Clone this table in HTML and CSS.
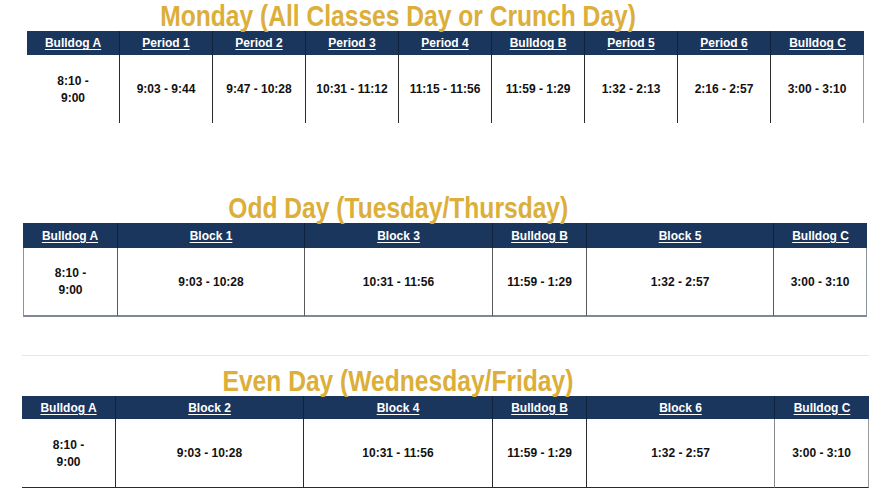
FILE: index.html
```html
<!DOCTYPE html>
<html>
<head>
<meta charset="utf-8">
<link rel="stylesheet" href="styles.css">
</head>
<body>
<main class="page">
  <section class="day mon">
    <h2 class="title"><span class="title-text">Monday (All Classes Day or Crunch Day)</span></h2>
    <div class="hd first"><u>Bulldog A</u></div>
    <div class="hd"><u>Period 1</u></div>
    <div class="hd"><u>Period 2</u></div>
    <div class="hd"><u>Period 3</u></div>
    <div class="hd"><u>Period 4</u></div>
    <div class="hd"><u>Bulldog B</u></div>
    <div class="hd"><u>Period 5</u></div>
    <div class="hd"><u>Period 6</u></div>
    <div class="hd"><u>Bulldog C</u></div>
    <div class="cell first">8:10 -<br>9:00</div>
    <div class="cell">9:03 - 9:44</div>
    <div class="cell">9:47 - 10:28</div>
    <div class="cell">10:31 - 11:12</div>
    <div class="cell">11:15 - 11:56</div>
    <div class="cell">11:59 - 1:29</div>
    <div class="cell">1:32 - 2:13</div>
    <div class="cell">2:16 - 2:57</div>
    <div class="cell last">3:00 - 3:10</div>
  </section>

  <section class="day odd">
    <h2 class="title"><span class="title-text">Odd Day (Tuesday/Thursday)</span></h2>
    <div class="hd first"><u>Bulldog A</u></div>
    <div class="hd"><u>Block 1</u></div>
    <div class="hd"><u>Block 3</u></div>
    <div class="hd"><u>Bulldog B</u></div>
    <div class="hd"><u>Block 5</u></div>
    <div class="hd"><u>Bulldog C</u></div>
    <div class="cell first">8:10 -<br>9:00</div>
    <div class="cell">9:03 - 10:28</div>
    <div class="cell">10:31 - 11:56</div>
    <div class="cell">11:59 - 1:29</div>
    <div class="cell">1:32 - 2:57</div>
    <div class="cell last">3:00 - 3:10</div>
  </section>

  <div class="gridline"></div>

  <section class="day even">
    <h2 class="title"><span class="title-text">Even Day (Wednesday/Friday)</span></h2>
    <div class="hd first"><u>Bulldog A</u></div>
    <div class="hd"><u>Block 2</u></div>
    <div class="hd"><u>Block 4</u></div>
    <div class="hd"><u>Bulldog B</u></div>
    <div class="hd"><u>Block 6</u></div>
    <div class="hd"><u>Bulldog C</u></div>
    <div class="cell first">8:10 -<br>9:00</div>
    <div class="cell">9:03 - 10:28</div>
    <div class="cell">10:31 - 11:56</div>
    <div class="cell">11:59 - 1:29</div>
    <div class="cell">1:32 - 2:57</div>
    <div class="cell last">3:00 - 3:10</div>
  </section>
</main>
</body>
</html>
```

FILE: styles.css
```css
html, body {
  margin: 0;
  padding: 0;
  background: #ffffff;
}

.page {
  width: 880px;
  height: 504px;
  overflow: hidden;
  font-family: "Liberation Sans", Arial, sans-serif;
  color: #111;
}

.day {
  display: grid;
}

.title {
  grid-row: 1;
  grid-column: 1 / -2;
  margin: 0;
  height: 31px;
  line-height: 31px;
  text-align: center;
  font-family: "Liberation Sans", Arial, sans-serif;
  font-weight: 700;
  font-size: 30px;
  color: #dcae3a;
  white-space: nowrap;
}

.title-text {
  display: inline-block;
  transform: scaleX(0.82);
  transform-origin: center;
}

.hd {
  grid-row: 2;
  background: #1b365d;
  color: #ffffff;
  font-size: 12px;
  font-weight: 700;
  display: flex;
  align-items: center;
  justify-content: center;
  border-left: 1px solid #10223c;
}

.hd.first {
  border-left: none;
}

.hd u {
  text-decoration-thickness: 1px;
  text-underline-offset: 2px;
}

.cell {
  grid-row: 3;
  display: flex;
  align-items: center;
  justify-content: center;
  text-align: center;
  font-size: 12px;
  font-weight: 700;
  line-height: 17px;
  border-left: 1px solid #2a2a2a;
  padding-top: 1px;
}

.cell.first {
  border-left: none;
}

.cell.last {
  border-right: 1px solid #9a9a9a;
}

/* Monday */
.mon {
  grid-template-columns: 92px 93px 93px 93px 93px 93px 93px 93px 94px;
  grid-template-rows: 31px 24px 68px;
  margin-left: 27px;
  width: 837px;
}

/* Odd day */
.odd {
  grid-template-columns: 94px 187px 188px 94px 187px 94px;
  grid-template-rows: 31px 25px 69px;
  margin-left: 23px;
  width: 845px;
  margin-top: 69px;
}

.odd .cell {
  border-bottom: 2px solid #7d8796;
  border-left-color: #5a5a5a;
}

.odd .cell.first {
  border-left: 1px solid #8a93a0;
}

.odd .cell.last {
  border-right-color: #8a93a0;
}

.gridline {
  margin: 38px 0 0 22px;
  width: 847px;
  height: 1px;
  background: #e6e6e6;
}

/* Even day */
.even {
  grid-template-columns: 93px 188px 189px 94px 188px 95px;
  grid-template-rows: 31px 23px 69px;
  margin-left: 22px;
  width: 847px;
  margin-top: 9px;
}

.even .cell {
  border-bottom: 1px solid #2a2a2a;
}

.even .cell.last {
  border-left-color: #8a8a8a;
}
```
